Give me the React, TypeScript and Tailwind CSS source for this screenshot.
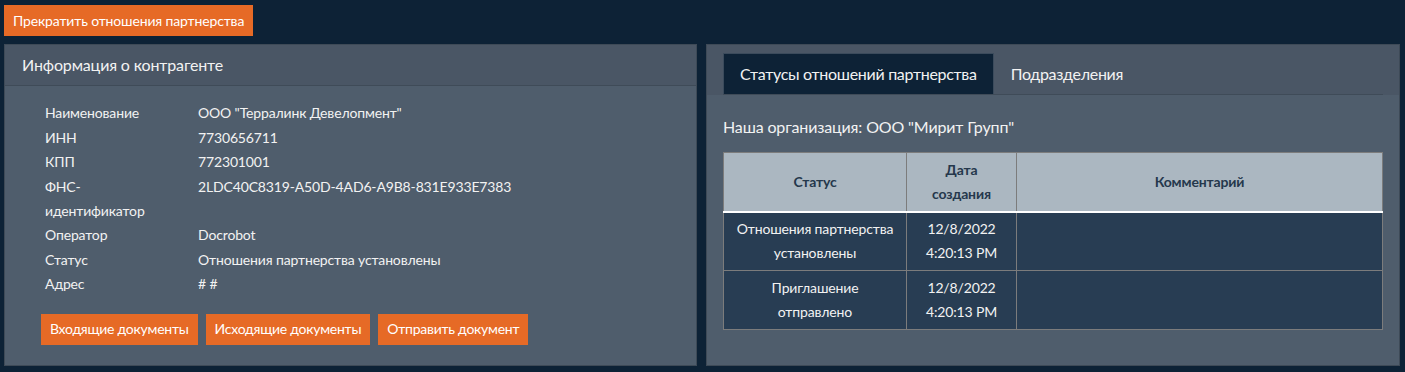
import React from 'react';

const info = [
  { label: 'Наименование', value: 'ООО "Терралинк Девелопмент"' },
  { label: 'ИНН', value: '7730656711' },
  { label: 'КПП', value: '772301001' },
  { label: 'ФНС-идентификатор', value: '2LDC40C8319-A50D-4AD6-A9B8-831E933E7383' },
  { label: 'Оператор', value: 'Docrobot' },
  { label: 'Статус', value: 'Отношения партнерства установлены' },
  { label: 'Адрес', value: '# #' },
];

const statuses = [
  { status: ['Отношения партнерства', 'установлены'], date: ['12/8/2022', '4:20:13 PM'], comment: '' },
  { status: ['Приглашение', 'отправлено'], date: ['12/8/2022', '4:20:13 PM'], comment: '' },
];

const OrangeButton: React.FC<{ children: React.ReactNode; tight?: boolean }> = ({ children, tight }) => (
  <button
    className={
      tight
        ? 'bg-[#e66a26] text-white text-[14px] h-[31px] px-[9px] leading-none whitespace-nowrap tracking-[-0.25px]'
        : 'bg-[#e66a26] text-white text-[14px] h-[31px] px-[9px] leading-none whitespace-nowrap tracking-[-0.15px]'
    }
  >
    {children}
  </button>
);

export default function App() {
  return (
    <div
      className="min-h-[372px] bg-[#0d2236] text-[#f2f2f2] pl-[4px] pr-[5px] pt-[5px] pb-[6px] tracking-[-0.15px]"
      style={{ fontFamily: 'Lato, "Noto Sans", sans-serif' }}
    >
      <OrangeButton>Прекратить отношения партнерства</OrangeButton>

      <div className="flex gap-[9px] mt-[8px]">
        {/* left panel */}
        <div className="flex-1 bg-[#4f5d6c] border border-[#3e4a57] h-[322px]">
          <div className="h-[41px] bg-[#4a5665] border-b border-[#3f4b58] flex items-center pl-[17px] text-[16px]">
            Информация о контрагенте
          </div>
          <div className="pt-[15px] pl-[40px] text-[14px]">
            {info.map((row) => (
              <div key={row.label} className="flex leading-[24px] py-[0.25px]">
                <div className="w-[153px] pr-[10px]">
                  {row.label === 'ФНС-идентификатор' ? <>ФНС-<br />идентификатор</> : row.label}
                </div>
                <div>{row.value}</div>
              </div>
            ))}
          </div>
          <div className="flex gap-[8px] pl-[36px] mt-[17px]">
            <OrangeButton tight>Входящие документы</OrangeButton>
            <OrangeButton tight>Исходящие документы</OrangeButton>
            <OrangeButton tight>Отправить документ</OrangeButton>
          </div>
        </div>

        {/* right panel */}
        <div className="flex-1 bg-[#4f5d6c] border border-[#3e4a57] h-[322px]">
          <div className="bg-[#4a5665] pt-[8px] px-[16px]">
            <div className="flex border-b border-[#3f4b58] text-[16px] tracking-[-0.3px]">
              <div className="h-[41px] px-[16px] flex items-center bg-[#0d2236] border border-[#3b4b5c] border-b-0">
                Статусы отношений партнерства
              </div>
              <div className="h-[41px] px-[17px] flex items-center">Подразделения</div>
            </div>
          </div>
          <div className="px-[16px] pt-[21px]">
            <div className="text-[16px] leading-[22px]">Наша организация: ООО "Мирит Групп"</div>
            <table className="mt-[14px] w-[660px] border-collapse text-[14px] text-center">
              <thead>
                <tr className="bg-[#abb7c1] text-[#25384c] font-bold">
                  <th className="w-[183px] h-[59px] border border-[#7c7c7c] font-bold">Статус</th>
                  <th className="w-[110px] border border-[#7c7c7c] font-bold leading-[24px]">
                    Дата<br />создания
                  </th>
                  <th className="border border-[#7c7c7c] font-bold">Комментарий</th>
                </tr>
              </thead>
              <tbody>
                {statuses.map((s, i) => (
                  <tr key={i} className={i === 0 ? 'bg-[#283d53] border-t-[2px] border-t-white' : 'bg-[#283d53]'}>
                    <td className="h-[59px] border border-[#7c7c7c] leading-[24px]">
                      {s.status[0]}<br />{s.status[1]}
                    </td>
                    <td className="border border-[#7c7c7c] leading-[24px]">
                      {s.date[0]}<br />{s.date[1]}
                    </td>
                    <td className="border border-[#7c7c7c]">{s.comment}</td>
                  </tr>
                ))}
              </tbody>
            </table>
          </div>
        </div>
      </div>
    </div>
  );
}
